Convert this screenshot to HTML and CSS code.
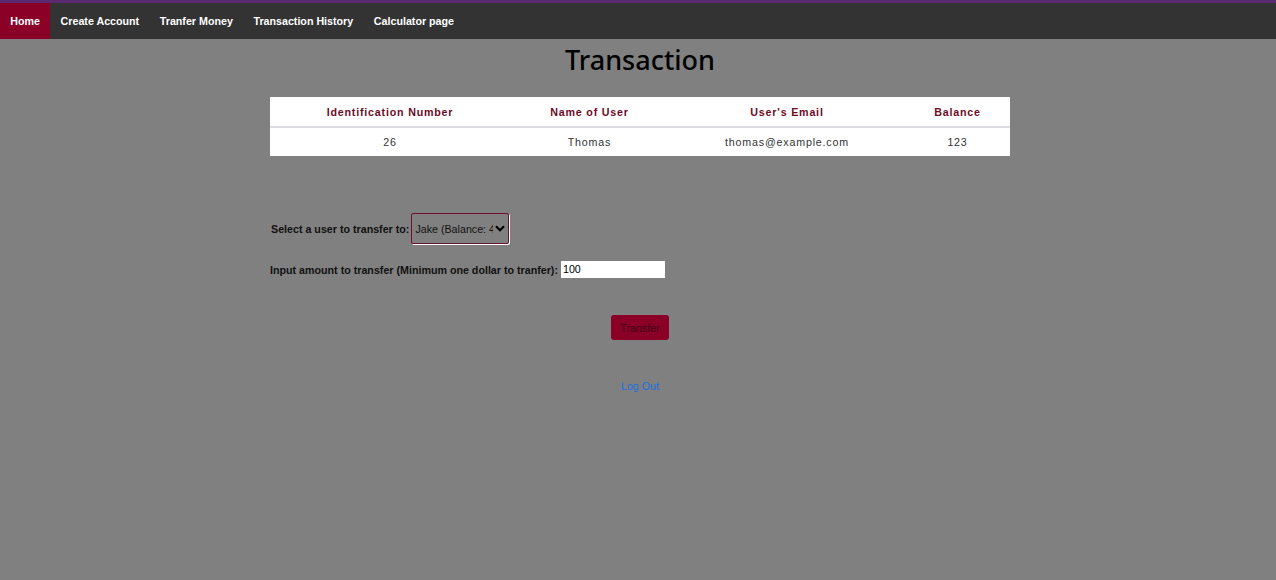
FILE: index.html
```html
<!DOCTYPE html>
<html>
<head>
<meta charset="utf-8">
<title>Transaction</title>
<link rel="stylesheet" href="styles.css">
</head>
<body>
<nav class="topnav">
  <a class="nav-link active" href="#">Home</a>
  <a class="nav-link" href="#">Create Account</a>
  <a class="nav-link" href="#">Tranfer Money</a>
  <a class="nav-link" href="#">Transaction History</a>
  <a class="nav-link" href="#">Calculator page</a>
</nav>
<main class="page">
  <h1 class="title">Transaction</h1>
  <table class="users">
    <thead>
      <tr>
        <th class="c1">Identification Number</th>
        <th class="c2">Name of User</th>
        <th class="c3">User's Email</th>
        <th class="c4">Balance</th>
      </tr>
    </thead>
    <tbody>
      <tr>
        <td>26</td>
        <td>Thomas</td>
        <td>thomas@example.com</td>
        <td>123</td>
      </tr>
    </tbody>
  </table>
  <form class="transfer">
    <div class="row row-select">
      <label class="lbl">Select a user to transfer to:</label>
      <div class="select">
        <span class="select-text">Jake (Balance: 4</span>
        <svg class="chev" width="10" height="7" viewBox="0 0 10 7"><path d="M1 1.2 L5 5.2 L9 1.2" fill="none" stroke="#000" stroke-width="2.2"/></svg>
      </div>
    </div>
    <div class="row row-input">
      <label class="lbl">Input amount to transfer (Minimum one dollar to tranfer):</label>
      <span class="amount">100</span>
    </div>
    <div class="actions">
      <button type="button" class="btn">Transfer</button>
    </div>
    <div class="logout"><a href="#">Log Out</a></div>
  </form>
</main>
</body>
</html>
```
FILE: styles.css
```css
html, body { margin: 0; padding: 0; }
body {
  background: #808080;
  font-family: "Liberation Sans", Arial, sans-serif;
  height: 580px;
}
.topnav {
  border-top: 3px solid #5b2a6e;
  background: #333333;
  height: 36px;
  display: flex;
  align-items: stretch;
}
.nav-link {
  display: flex;
  align-items: center;
  padding: 0 10.3px;
  color: #ffffff;
  font-size: 10.7px;
  font-weight: bold;
  text-decoration: none;
}
.nav-link.active { background: #8a0026; }
.page {
  width: 740px;
  margin: 0 auto;
  padding-left: 4px;
}
.title {
  margin: 4px 0 0;
  text-align: center;
  font-family: "Noto Sans", sans-serif;
  font-weight: 500;
  font-size: 27px;
  line-height: 34px;
  color: #000;
}
.users {
  margin-top: 20px;
  width: 740px;
  border-collapse: collapse;
  background: #ffffff;
  font-size: 10.7px;
  letter-spacing: 0.8px;
}
.users th {
  color: #6e0a25;
  font-weight: bold;
  height: 29px;
  padding: 0;
  border-bottom: 2px solid #dcdde3;
}
.users td {
  color: #333;
  text-align: center;
  height: 28px;
  padding: 0;
}
.c1 { width: 240px; }
.c2 { width: 159px; }
.c3 { width: 236px; }
.c4 { width: 105px; }
.transfer { margin-top: 57px; }
.row { display: flex; align-items: center; }
.lbl { font-size: 10.7px; font-weight: bold; color: #111; }
.row-select .lbl { margin-left: 1px; margin-right: 2px; }
.select {
  border: 1px solid #6e1030;
  border-radius: 2px;
  box-shadow: 1px 1px 0 #ffffff;
  display: flex;
  align-items: center;
  padding-left: 3px;
  box-sizing: border-box;
  width: 98px;
  height: 31px;
}
.select-text { font-size: 10.7px; color: #111; white-space: nowrap; width: 78px; overflow: hidden; }
.chev { margin-left: 2px; }
.row-input { margin-top: 17px; }
.amount {
  margin-left: 3px;
  width: 104px;
  height: 17px;
  background: #fff;
  font-size: 10.7px;
  color: #000;
  line-height: 17px;
  padding-left: 2px;
  box-sizing: border-box;
}
.actions { display: flex; justify-content: center; margin-top: 37px; }
.btn {
  background: #8a0026;
  border: none;
  border-radius: 3px;
  width: 58px;
  height: 25px;
  font-family: "Liberation Sans", Arial, sans-serif;
  font-size: 10.7px;
  color: #3d0012;
  padding: 0;
}
.logout { text-align: center; margin-top: 40px; font-size: 10.7px; }
.logout a { color: #1a6fe0; text-decoration: none; }
```
